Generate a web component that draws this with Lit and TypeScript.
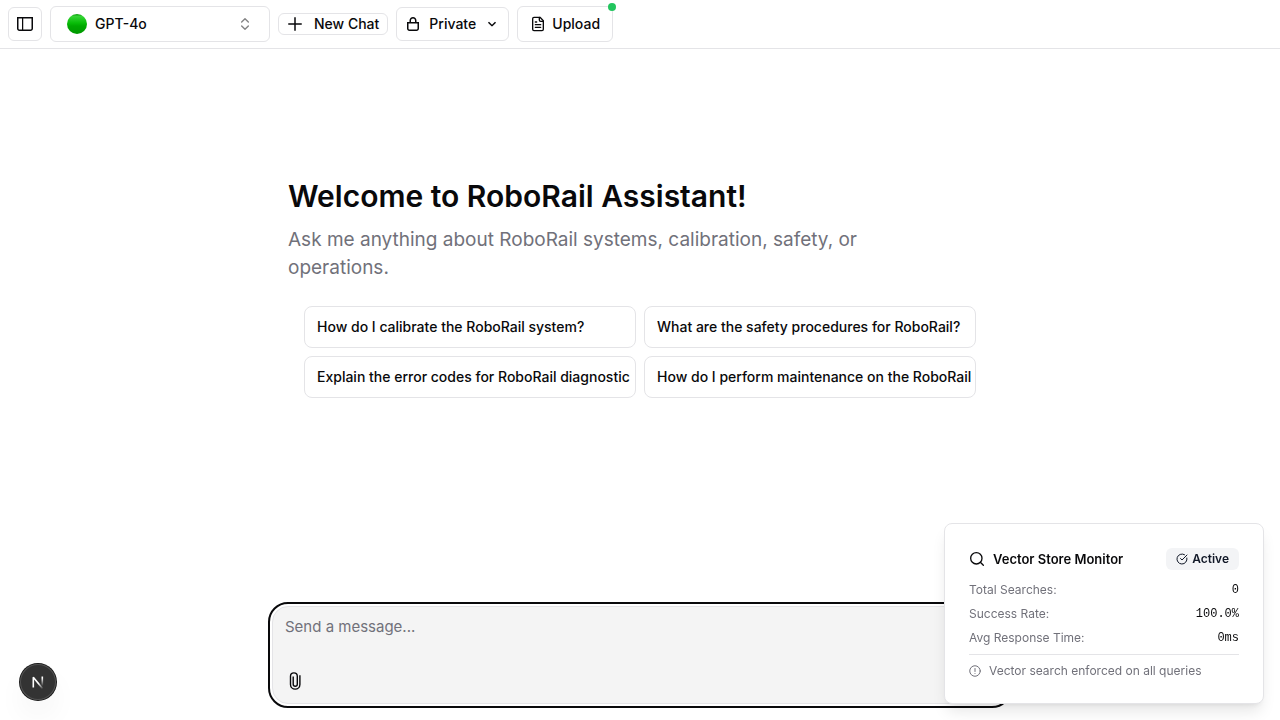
import { LitElement, html, css, svg } from "lit";
import { customElement, property, state } from "lit/decorators.js";

const base = css`
  :host {
    font-family: Inter, "Open Sans", sans-serif;
    color: #09090b;
  }
  *,
  *::before,
  *::after {
    box-sizing: border-box;
  }
  button,
  select,
  textarea {
    font: inherit;
    color: inherit;
    margin: 0;
  }
  button,
  select {
    cursor: pointer;
  }
  svg {
    display: block;
    flex: none;
  }
`;

const sidebarIcon = svg`<path fill-rule="evenodd" clip-rule="evenodd" d="M6.245 2.5H14.5V12.5C14.5 13.0523 14.0523 13.5 13.5 13.5H6.245V2.5ZM4.995 2.5H1.5V12.5C1.5 13.0523 1.94772 13.5 2.5 13.5H4.995V2.5ZM0 1H1.5H14.5H16V2.5V12.5C16 13.8807 14.8807 15 13.5 15H2.5C1.11929 15 0 13.8807 0 12.5V2.5V1Z"/>`;
const lockIcon = svg`<path fill-rule="evenodd" clip-rule="evenodd" d="M10 4.5V6H6V4.5C6 3.39543 6.89543 2.5 8 2.5C9.10457 2.5 10 3.39543 10 4.5ZM4.5 6V4.5C4.5 2.567 6.067 1 8 1C9.933 1 11.5 2.567 11.5 4.5V6H12.5H14V7.5V12.5C14 13.8807 12.8807 15 11.5 15H4.5C3.11929 15 2 13.8807 2 12.5V7.5V6H3.5H4.5ZM11.5 7.5H10H6H4.5H3.5V12.5C3.5 13.0523 3.94772 13.5 4.5 13.5H11.5C12.0523 13.5 12.5 13.0523 12.5 12.5V7.5H11.5Z"/>`;
const chevronIcon = svg`<path fill-rule="evenodd" clip-rule="evenodd" d="M12.0607 6.74999L11.5303 7.28032L8.7071 10.1035C8.31657 10.4941 7.68341 10.4941 7.29288 10.1035L4.46966 7.28032L3.93933 6.74999L4.99999 5.68933L5.53032 6.21966L7.99999 8.68933L10.4697 6.21966L11 5.68933L12.0607 6.74999Z"/>`;

@customElement("chat-header")
export class ChatHeader extends LitElement {
  static styles = [
    base,
    css`
      :host {
        display: block;
        font-size: 14px;
        font-weight: 500;
        line-height: 20px;
      }
      .bar {
        display: flex;
        align-items: center;
        gap: 8px;
        height: 49px;
        padding: 0 8px;
        border-bottom: 1px solid #e4e4e7;
        background: #fff;
      }
      .box {
        display: flex;
        align-items: center;
        height: 34px;
        padding: 0 8px;
        border: 1px solid #e4e4e7;
        border-radius: 6px;
        background: #fff;
        white-space: nowrap;
      }
      .tall {
        height: 36px;
      }
      .model {
        width: 220px;
        padding: 0 16px;
        gap: 8px;
      }
      .new {
        height: 22px;
        gap: 11px;
      }
      .visibility {
        gap: 8px;
      }
      .upload {
        position: relative;
        gap: 6px;
        padding: 0 12px;
      }
      .dot {
        position: absolute;
        top: -4px;
        right: -4px;
        width: 8px;
        height: 8px;
        border-radius: 50%;
        background: #22c55e;
      }
      select {
        appearance: none;
        border: 0;
        padding: 0;
        background: transparent;
        outline: none;
      }
      .grow {
        flex: 1;
        min-width: 0;
      }
      .faint {
        opacity: 0.5;
      }
    `,
  ];

  render() {
    return html`
      <header class="bar">
        <button class="box" aria-label="Toggle sidebar">
          <svg width="16" height="16" viewBox="0 0 16 16" fill="currentColor">${sidebarIcon}</svg>
        </button>
        <label class="box tall model">
          <svg width="20" height="20" viewBox="0 0 20 20" aria-hidden="true">
            <defs>
              <linearGradient id="ball" x1="0" y1="0" x2="0" y2="1">
                <stop offset="0" stop-color="#0a9a0a" />
                <stop offset="0.12" stop-color="#35d435" />
                <stop offset="0.45" stop-color="#08bd08" />
                <stop offset="0.6" stop-color="#00a800" />
                <stop offset="1" stop-color="#009800" />
              </linearGradient>
            </defs>
            <circle cx="10" cy="10" r="10" fill="url(#ball)" />
          </svg>
          <select class="grow" aria-label="Model">
            <option>GPT-4o</option>
          </select>
          <svg class="faint" width="16" height="16" viewBox="0 0 24 24" fill="none" stroke="currentColor" stroke-width="2" stroke-linecap="round" stroke-linejoin="round">
            <path d="m7 15 5 5 5-5" /><path d="m7 9 5-5 5 5" />
          </svg>
        </label>
        <button class="box new">
          <svg width="16" height="16" viewBox="0 0 16 16" fill="none" stroke="currentColor" stroke-width="1.5">
            <path d="M8 1.25v13.5M1.25 8h13.5" />
          </svg>
          New Chat
        </button>
        <label class="box visibility">
          <svg width="16" height="16" viewBox="0 0 16 16" fill="currentColor">${lockIcon}</svg>
          <select aria-label="Visibility">
            <option>Private</option>
            <option>Public</option>
          </select>
          <svg width="16" height="16" viewBox="0 0 16 16" fill="currentColor">${chevronIcon}</svg>
        </label>
        <button class="box tall upload">
          <svg width="16" height="16" viewBox="0 0 24 24" fill="none" stroke="currentColor" stroke-width="2" stroke-linecap="round" stroke-linejoin="round">
            <path d="M15 2H6a2 2 0 0 0-2 2v16a2 2 0 0 0 2 2h12a2 2 0 0 0 2-2V7Z" />
            <path d="M14 2v4a2 2 0 0 0 2 2h4" /><path d="M10 9H8" /><path d="M16 13H8" /><path d="M16 17H8" />
          </svg>
          Upload
          <span class="dot"></span>
        </button>
      </header>
    `;
  }
}

@customElement("chat-greeting")
export class ChatGreeting extends LitElement {
  @property({ attribute: false }) prompts: string[] = [];

  static styles = [
    base,
    css`
      :host {
        display: block;
      }
      .greeting {
        max-width: 768px;
        margin: 0 auto;
        padding: 0 32px;
      }
      h1 {
        margin: 0 0 12px;
        font-size: 30px;
        line-height: 36px;
        font-weight: 600;
      }
      p {
        margin: 0;
        max-width: 600px;
        font-size: 19px;
        line-height: 28px;
        color: #71717a;
      }
      .prompts {
        display: grid;
        grid-template-columns: repeat(2, minmax(0, 1fr));
        gap: 8px;
        margin: 24px 16px 0;
      }
      .prompt {
        padding: 10px 4px 10px 12px;
        border: 1px solid #e4e4e7;
        border-radius: 8px;
        background: #fff;
        font-size: 14px;
        line-height: 20px;
        font-weight: 500;
        text-align: left;
      }
      .text {
        display: block;
        overflow: hidden;
        white-space: nowrap;
      }
    `,
  ];

  render() {
    return html`
      <section class="greeting">
        <h1>Welcome to RoboRail Assistant!</h1>
        <p>Ask me anything about RoboRail systems, calibration, safety, or operations.</p>
        <div class="prompts">
          ${this.prompts.map((p) => html`<button class="prompt"><span class="text">${p}</span></button>`)}
        </div>
      </section>
    `;
  }
}

@customElement("chat-composer")
export class ChatComposer extends LitElement {
  @state() private text = "";

  static styles = [
    base,
    css`
      :host {
        display: block;
      }
      form {
        max-width: 768px;
        margin: 0 auto;
        padding: 0 16px 16px;
      }
      .field {
        display: flex;
        flex-direction: column;
        border: 1px solid #e4e4e7;
        border-radius: 16px;
        background: #f4f4f4;
        outline: 2px solid #09090b;
        outline-offset: 2px;
      }
      textarea {
        display: block;
        width: 100%;
        height: 58px;
        padding: 8px 12px;
        border: 0;
        outline: 0;
        resize: none;
        background: transparent;
        font-size: 15px;
        line-height: 24px;
      }
      textarea::placeholder {
        color: #71717a;
        opacity: 1;
      }
      .tools {
        display: flex;
        padding: 0 8px 6px;
      }
      .attach {
        display: flex;
        padding: 7px;
        border: 0;
        border-radius: 8px;
        background: transparent;
      }
    `,
  ];

  render() {
    return html`
      <form @submit=${(e: Event) => e.preventDefault()}>
        <div class="field">
          <textarea
            aria-label="Message"
            placeholder="Send a message..."
            .value=${this.text}
            @input=${(e: Event) => (this.text = (e.target as HTMLTextAreaElement).value)}
          ></textarea>
          <div class="tools">
            <button type="button" class="attach" aria-label="Attach files">
              <svg width="14" height="18" viewBox="0 0 14 18" fill="none" stroke="currentColor" stroke-width="1.4">
                <path d="M11.9 3.2v9.2a4.7 4.7 0 0 1-9.4 0V4.3a3.4 3.4 0 0 1 6.8 0v7.9a2.05 2.05 0 0 1-4.1 0V4.6" />
              </svg>
            </button>
          </div>
        </div>
      </form>
    `;
  }
}

@customElement("vector-monitor")
export class VectorMonitor extends LitElement {
  @property({ attribute: false }) stats: [string, string][] = [];

  static styles = [
    base,
    css`
      :host {
        display: block;
      }
      .card {
        padding: 24px;
        border: 1px solid #e4e4e7;
        border-radius: 8px;
        background: #fff;
        box-shadow: 0 10px 15px -3px rgb(0 0 0 / 0.1), 0 4px 6px -4px rgb(0 0 0 / 0.1);
        font-size: 12px;
        line-height: 16px;
      }
      .head {
        display: flex;
        align-items: center;
        gap: 8px;
        margin-bottom: 12px;
      }
      h2 {
        flex: 1;
        margin: 0;
        font-size: 13px;
        line-height: 20px;
        font-weight: 600;
        white-space: nowrap;
      }
      .badge {
        display: flex;
        align-items: center;
        gap: 4px;
        padding: 3px 10px;
        border-radius: 6px;
        background: #f3f4f6;
        color: #111827;
        font-weight: 600;
      }
      dl {
        display: grid;
        gap: 8px;
        margin: 0;
      }
      .row {
        display: flex;
        justify-content: space-between;
      }
      dt,
      .note {
        color: #71717a;
      }
      dd {
        margin: 0;
        font-family: "Liberation Mono", monospace;
      }
      .note {
        display: flex;
        align-items: center;
        gap: 8px;
        margin-top: 8px;
        padding-top: 8px;
        border-top: 1px solid #e4e4e7;
      }
    `,
  ];

  render() {
    return html`
      <aside class="card">
        <div class="head">
          <svg width="16" height="16" viewBox="0 0 24 24" fill="none" stroke="currentColor" stroke-width="2" stroke-linecap="round" stroke-linejoin="round">
            <circle cx="11" cy="11" r="8.5" /><path d="m21.5 21.5-4.5-4.5" />
          </svg>
          <h2>Vector Store Monitor</h2>
          <span class="badge">
            <svg width="12" height="12" viewBox="0 0 24 24" fill="none" stroke="currentColor" stroke-width="2" stroke-linecap="round" stroke-linejoin="round">
              <path d="M21.8 10A10 10 0 1 1 17 3.335" /><path d="m9 11 3 3L22 4" />
            </svg>
            Active
          </span>
        </div>
        <dl>
          ${this.stats.map(([k, v]) => html`<div class="row"><dt>${k}:</dt><dd>${v}</dd></div>`)}
        </dl>
        <div class="note">
          <svg width="12" height="12" viewBox="0 0 24 24" fill="none" stroke="currentColor" stroke-width="2" stroke-linecap="round">
            <circle cx="12" cy="12" r="10.5" /><path d="M12 7v6M12 17h.01" />
          </svg>
          Vector search enforced on all queries
        </div>
      </aside>
    `;
  }
}

@customElement("app-root")
export class AppRoot extends LitElement {
  static styles = [
    base,
    css`
      :host {
        display: block;
      }
      .page {
        display: flex;
        flex-direction: column;
        min-height: 100vh;
        background: #fff;
      }
      main {
        flex: 1;
        padding-top: 129px;
      }
      .monitor {
        position: fixed;
        right: 16px;
        bottom: 16px;
        width: 320px;
      }
      .dev {
        position: fixed;
        left: 20px;
        bottom: 20px;
        width: 36px;
        height: 36px;
        padding: 0;
        border: 0;
        border-radius: 50%;
        background: #333;
        display: flex;
        align-items: center;
        justify-content: center;
        box-shadow: 0 0 0 1px #171717, inset 0 0 0 1px #525252, 0 16px 32px -8px rgb(0 0 0 / 0.14);
      }
    `,
  ];

  private prompts = [
    "How do I calibrate the RoboRail system?",
    "What are the safety procedures for RoboRail?",
    "Explain the error codes for RoboRail diagnostic",
    "How do I perform maintenance on the RoboRail",
  ];

  private stats: [string, string][] = [
    ["Total Searches", "0"],
    ["Success Rate", "100.0%"],
    ["Avg Response Time", "0ms"],
  ];

  render() {
    return html`
      <div class="page">
        <chat-header></chat-header>
        <main><chat-greeting .prompts=${this.prompts}></chat-greeting></main>
        <chat-composer></chat-composer>
      </div>
      <vector-monitor class="monitor" .stats=${this.stats}></vector-monitor>
      <button class="dev" aria-label="Open developer tools">
        <svg width="14" height="14" viewBox="0 0 14 14" fill="none" stroke-width="1.6">
          <defs>
            <linearGradient id="right" gradientUnits="userSpaceOnUse" x1="0" y1="1" x2="0" y2="11">
              <stop offset="0.2" stop-color="#fff" /><stop offset="1" stop-color="#fff" stop-opacity="0" />
            </linearGradient>
            <linearGradient id="diag" gradientUnits="userSpaceOnUse" x1="8" y1="8" x2="12" y2="13">
              <stop offset="0" stop-color="#fff" /><stop offset="1" stop-color="#fff" stop-opacity="0.1" />
            </linearGradient>
          </defs>
          <path d="M2.3 12.5V2.3L11.6 13.6" stroke="url(#diag)" stroke-linejoin="bevel" />
          <path d="M11.3 1.5v9.5" stroke="url(#right)" />
        </svg>
      </button>
    `;
  }
}
